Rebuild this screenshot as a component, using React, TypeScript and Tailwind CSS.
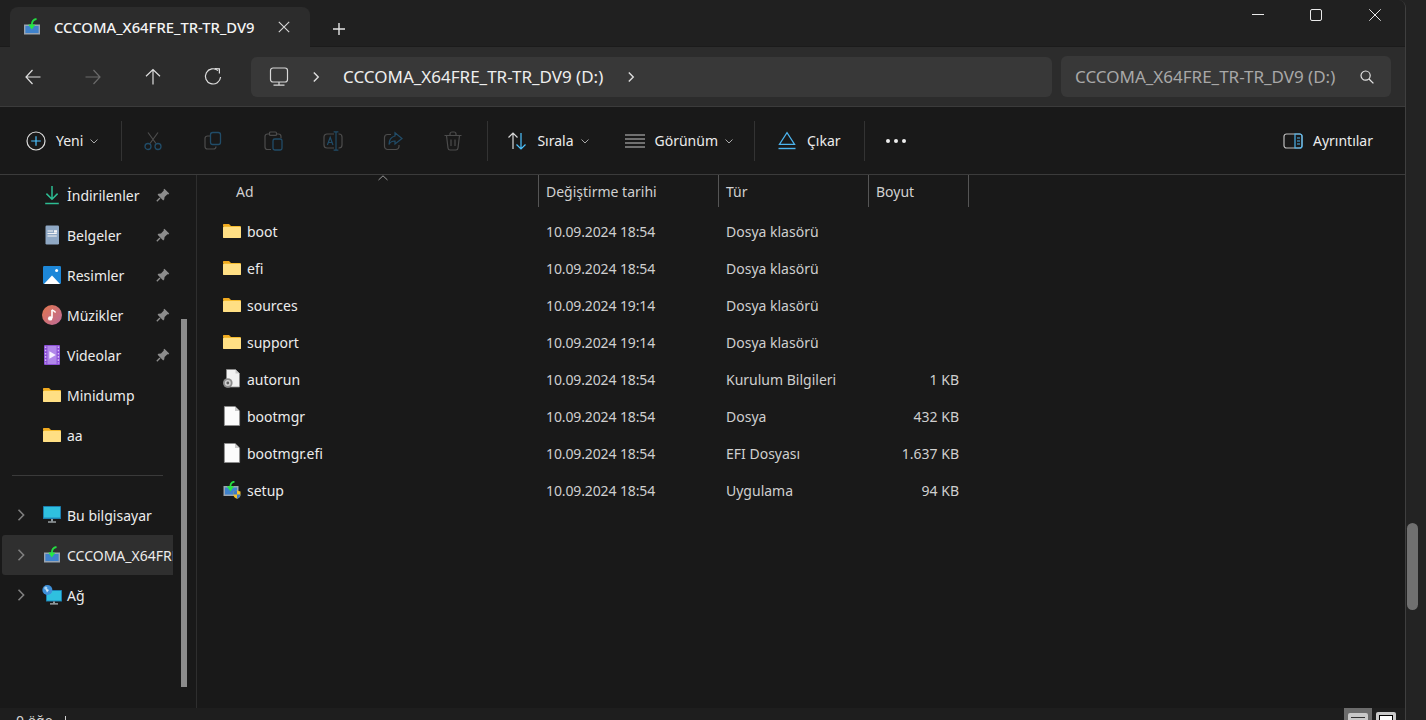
import type { ReactNode } from "react";

const FONT = "font-['Noto_Sans','Liberation_Sans',sans-serif]";

const Ico = ({ s = 20, className = "", children }: { s?: number; className?: string; children: ReactNode }) => (
  <svg width={s} height={s} viewBox="0 0 20 20" fill="none" className={`shrink-0 ${className}`}>
    {children}
  </svg>
);

const Back = ({ color = "#dedede", flip = false }: { color?: string; flip?: boolean }) => (
  <Ico s={20} className={flip ? "-scale-x-100" : ""}>
    <path d="M3 10H17.5M9.5 3L3 10L9.5 17" stroke={color} strokeWidth="1.2" />
  </Ico>
);

const Up = () => (
  <Ico>
    <path d="M10 17.5V2.5M3 9.2L10 2.5L17 9.2" stroke="#dedede" strokeWidth="1.2" />
  </Ico>
);

const Refresh = () => (
  <Ico>
    <path d="M15 3.6 A7.6 7.6 0 1 0 17.6 10" stroke="#dedede" strokeWidth="1.2" />
    <path d="M11.6 1.6L16.4 1.8V6.4" stroke="#dedede" strokeWidth="1.2" />
  </Ico>
);

const Monitor = () => (
  <Ico>
    <rect x="1.5" y="1" width="17" height="14" rx="2.5" stroke="#d8d8d8" strokeWidth="1.2" />
    <path d="M10 15V18M4.5 18.2H15.5" stroke="#d8d8d8" strokeWidth="1.2" />
  </Ico>
);

const Chevron = ({ color = "#dedede", s = 16 }: { color?: string; s?: number }) => (
  <svg width={s} height={s} viewBox="0 0 16 16" fill="none" className="shrink-0">
    <path d="M5.5 2.8L10.6 8L5.5 13.2" stroke={color} strokeWidth="1.6" />
  </svg>
);

const Caret = () => (
  <svg width="10" height="10" viewBox="0 0 10 10" fill="none" className="-ml-[4px] shrink-0">
    <path d="M1.5 3.5L5 7L8.5 3.5" stroke="#a8a8a8" strokeWidth="1" />
  </svg>
);

const Drive = ({ s = 18 }: { s?: number }) => (
  <svg width={s} height={s} viewBox="0 0 18 18" fill="none" className="shrink-0">
    <rect x="1" y="6.5" width="16" height="10" fill="#9aa5b2" />
    <rect x="2.4" y="8" width="13.2" height="7" fill="#3f82cc" />
    <path d="M13.5 1C10 1.6 8.8 3.6 8.8 7" stroke="#25dc42" strokeWidth="1.8" />
    <path d="M5.2 6.5H12.4L8.8 11.6Z" fill="#25e843" />
  </svg>
);

const Folder = () => (
  <svg width="18" height="14" viewBox="0 0 18 14" fill="none" className="shrink-0">
    <path d="M0 1C0 .4.4 0 1 0H6L8 2H0Z" fill="#f0a91f" />
    <rect y="2" width="18" height="12" rx="1" fill="#f5bb2e" />
    <rect y="3" width="18" height="11" rx="1" fill="#ffdf84" />
  </svg>
);

const Page = ({ gear = false }: { gear?: boolean }) => (
  <svg width="18" height="20" viewBox="0 0 18 20" fill="none" className="shrink-0">
    {gear ? (
      <g>
        <path d="M3.5 .5H12.5L16.5 4.5V18H3.5Z" fill="#f2f2f2" stroke="#8d8d8d" strokeWidth=".8" />
        <path d="M12.5 .5V4.5H16.5" fill="#c9c9c9" />
        <circle cx="4.8" cy="14" r="4.8" fill="#8c8c8c" />
        <circle cx="4.8" cy="14" r="3" fill="#d0d0d0" />
        <circle cx="4.8" cy="14" r="1.4" fill="#5d5d5d" />
      </g>
    ) : (
      <g>
        <path d="M1.4 .5H12L16.6 5V19.5H1.4Z" fill="#fcfcfc" stroke="#8d8d8d" strokeWidth=".8" />
        <path d="M12 .5V5H16.6" fill="#c9c9c9" />
      </g>
    )}
  </svg>
);

const Setup = () => (
  <svg width="18" height="18" viewBox="0 0 18 18" fill="none" className="shrink-0">
    <rect x="0.5" y="5" width="15" height="10" fill="#9aa5b2" />
    <rect x="2" y="6.5" width="12" height="7" fill="#3f82cc" />
    <path d="M11.5 .6C8 1.2 7.4 3 7.4 5.5" stroke="#25dc42" strokeWidth="1.8" />
    <path d="M3.8 5.2H11L7.4 10.4Z" fill="#25e843" />
    <path d="M10.5 10.5L14 9.5L17.5 10.5V14C17.5 16 15.5 17.3 14 17.8C12.5 17.3 10.5 16 10.5 14Z" fill="#f3c22e" />
    <path d="M14 9.5V13.6H10.5C10.5 12 10.5 11 10.5 10.5Z" fill="#3a78c9" />
    <path d="M14 13.6H17.5C17.5 16 15.5 17.3 14 17.8Z" fill="#3a78c9" />
  </svg>
);

const DownloadIco = () => (
  <svg width="18" height="20" viewBox="0 0 18 20" fill="none" className="shrink-0">
    <path d="M9 1V14M3.4 8.6L9 14.2L14.6 8.6M2.2 18.4H15.8" stroke="#2dbd93" strokeWidth="1.5" />
  </svg>
);

const DocIco = () => (
  <svg width="18" height="20" viewBox="0 0 18 20" fill="none" className="shrink-0">
    <rect x="2.5" y="0.5" width="13.5" height="19" rx="1.2" fill="#8fa8c4" />
    <path d="M4.5 6H10M4.5 8.5H13.8M4.5 11H13.8" stroke="#f4f4f4" strokeWidth="1" />
    <rect x="11" y="5.2" width="3" height="2.4" fill="#f4f4f4" />
  </svg>
);

const PicIco = () => (
  <svg width="18" height="18" viewBox="0 0 18 18" fill="none" className="shrink-0">
    <rect width="18" height="18" rx="1.2" fill="#1d87d8" />
    <circle cx="13.6" cy="4.6" r="1.5" fill="#fff" />
    <path d="M1 18L9 9.5L17 18Z" fill="#fff" />
  </svg>
);

const MusicIco = () => (
  <svg width="20" height="20" viewBox="0 0 20 20" fill="none" className="shrink-0">
    <defs>
      <linearGradient id="music" x1="0" y1="0" x2="1" y2="1">
        <stop offset="0" stopColor="#e2764c" />
        <stop offset="1" stopColor="#bd6a9a" />
      </linearGradient>
    </defs>
    <circle cx="10" cy="10" r="10" fill="url(#music)" />
    <path d="M10 5V13" stroke="#fff" strokeWidth="1.6" />
    <path d="M10 4.6C11 6 13 6 13.4 7.6" stroke="#fff" strokeWidth="1.6" />
    <circle cx="8.2" cy="13.4" r="2.2" fill="#fff" />
  </svg>
);

const VideoIco = () => (
  <svg width="16" height="20" viewBox="0 0 16 20" fill="none" className="shrink-0">
    <rect width="16" height="20" rx="1" fill="#8b4fd6" />
    <rect x="3.4" y="1" width="9.2" height="18" fill="#b187ea" />
    <path d="M1.6 1.5V18.5M14.4 1.5V18.5" stroke="#d6bdf5" strokeWidth="1.4" strokeDasharray="1.6 1.6" />
    <path d="M5.4 6.2L11.8 10L5.4 13.8Z" fill="#f6efff" />
  </svg>
);

const PcIco = () => (
  <svg width="18" height="18" viewBox="0 0 18 18" fill="none" className="shrink-0">
    <rect y="0" width="18" height="13" rx=".6" fill="#1c7fb0" />
    <rect x="1" y="1" width="16" height="10.6" fill="#2fc0df" />
    <rect x="8" y="13" width="2" height="2.4" fill="#8f9aa0" />
    <rect x="5" y="15.4" width="8" height="1.2" fill="#b8c0c4" />
  </svg>
);

const NetIco = () => (
  <svg width="20" height="20" viewBox="0 0 20 20" fill="none" className="shrink-0">
    <rect x="4" y="5" width="16" height="11.5" rx=".6" fill="#1c7fb0" />
    <rect x="5" y="6" width="14" height="9.6" fill="#2fc0df" />
    <rect x="11" y="16.5" width="2" height="1.8" fill="#8f9aa0" />
    <rect x="8" y="18.3" width="8" height="1.2" fill="#b8c0c4" />
    <circle cx="5.4" cy="5" r="5" fill="#3e8fd8" />
    <path d="M3 3L7 5L5 7.5Z" fill="#cfe6f7" />
    <circle cx="3.8" cy="3" r="1.6" fill="#a9d4f2" />
  </svg>
);

const Pin = () => (
  <svg width="14" height="14" viewBox="0 0 14 14" fill="none" className="shrink-0">
    <path d="M8.4.8L13.2 5.6L12.4 6.4L11.4 6.2L8.6 9L8.2 11.6L7.2 12.4L1.6 6.8L2.4 5.8L5 5.4L7.8 2.6L7.6 1.6Z" fill="#8c8c8c" />
    <path d="M4 10L.8 13.2" stroke="#8c8c8c" strokeWidth="1.4" />
  </svg>
);

const Sep = () => <div className="mx-[1px] h-10 w-px shrink-0 bg-[#333333]" />;

const DIM = "#4c4c4c";
const DIMB = "#214c68";

const Cut = () => (
  <Ico>
    <path d="M5 1.5L13 12.5M15 1.5L7 12.5" stroke={DIM} strokeWidth="1.2" />
    <circle cx="5" cy="15.5" r="3" stroke={DIMB} strokeWidth="1.3" />
    <circle cx="15" cy="15.5" r="3" stroke={DIMB} strokeWidth="1.3" />
  </Ico>
);

const Copy = () => (
  <Ico>
    <rect x="7.5" y="1.5" width="10" height="12" rx="2.2" stroke={DIMB} strokeWidth="1.3" />
    <path d="M7 5H4.5C3 5 2 6 2 7.5V15.5C2 17 3 18 4.5 18H10.5C12 18 13 17 13 15.5" stroke={DIM} strokeWidth="1.2" />
  </Ico>
);

const Paste = () => (
  <Ico>
    <path d="M6 3H4.5C3 3 2 4 2 5.5V16C2 17.5 3 18.5 4.5 18.5H8M14 3H15.5C17 3 18 4 18 5.5V7" stroke={DIM} strokeWidth="1.2" />
    <rect x="6.5" y="1" width="7" height="3.4" rx="1" stroke={DIM} strokeWidth="1.2" />
    <rect x="10" y="8" width="9" height="11" rx="1.8" stroke={DIMB} strokeWidth="1.3" />
  </Ico>
);

const Rename = () => (
  <Ico>
    <path d="M11 3H4C2.5 3 1 4 1 6V14C1 16 2.5 17 4 17H11M15.5 3H16C17.5 3 19 4 19 6V14C19 16 17.5 17 16 17H15.5" stroke={DIM} strokeWidth="1.2" />
    <path d="M13 .8V19.2M10.6.8H15.4M10.6 19.2H15.4" stroke={DIMB} strokeWidth="1.2" />
    <path d="M4.4 14L7.2 6.2L10 14M5.4 11.5H9" stroke={DIMB} strokeWidth="1.2" />
  </Ico>
);

const Share = () => (
  <Ico>
    <path d="M8 3.5H4.5C3 3.5 1.5 4.5 1.5 6.5V15.5C1.5 17 3 18.5 4.5 18.5H13C14.5 18.5 16 17 16 15.5V14" stroke={DIM} strokeWidth="1.2" />
    <path d="M12 1.8L19 7.5L12 13V10C9 10 7 11 6 13.5C6 9 8 6 12 5Z" stroke={DIMB} strokeWidth="1.2" />
  </Ico>
);

const Trash = () => (
  <Ico>
    <path d="M1.5 4.5H18.5M7 4.5V3C7 2 8 1 9 1H11C12 1 13 2 13 3V4.5M3.5 4.5L5 17C5.1 18 6 19 7 19H13C14 19 14.9 18 15 17L16.5 4.5M8 8.5V15M12 8.5V15" stroke={DIM} strokeWidth="1.2" />
  </Ico>
);

const Tool = ({ icon, label, caret }: { icon: ReactNode; label: string; caret?: boolean }) => (
  <div className="flex items-center gap-[10px]">
    {icon}
    <span className="text-[14px] text-[#ececec]">{label}</span>
    {caret && <Caret />}
  </div>
);

const SideRow = ({ icon, label, pin, chevron, active }: { icon: ReactNode; label: string; pin?: boolean; chevron?: boolean; active?: boolean }) => (
  <div className={`flex h-10 items-center overflow-hidden rounded-l-[3px] ${active ? "bg-[#2f2f2f]" : ""}`}>
    <div className="flex w-[37px] shrink-0 justify-center pl-[1px]">{chevron && <Chevron color="#7e7e7e" />}</div>
    <div className="flex w-[26px] shrink-0 justify-center">{icon}</div>
    <span className="ml-[2px] whitespace-nowrap text-[14px] text-[#ececec]">{label}</span>
    {pin && (
      <div className="ml-auto mr-[3px]">
        <Pin />
      </div>
    )}
  </div>
);

const COLS = "grid grid-cols-[340px_180px_150px_101px]";

const files: { icon: ReactNode; name: string; date: string; type: string; size: string }[] = [
  { icon: <Folder />, name: "boot", date: "10.09.2024 18:54", type: "Dosya klasörü", size: "" },
  { icon: <Folder />, name: "efi", date: "10.09.2024 18:54", type: "Dosya klasörü", size: "" },
  { icon: <Folder />, name: "sources", date: "10.09.2024 19:14", type: "Dosya klasörü", size: "" },
  { icon: <Folder />, name: "support", date: "10.09.2024 19:14", type: "Dosya klasörü", size: "" },
  { icon: <Page gear />, name: "autorun", date: "10.09.2024 18:54", type: "Kurulum Bilgileri", size: "1 KB" },
  { icon: <Page />, name: "bootmgr", date: "10.09.2024 18:54", type: "Dosya", size: "432 KB" },
  { icon: <Page />, name: "bootmgr.efi", date: "10.09.2024 18:54", type: "EFI Dosyası", size: "1.637 KB" },
  { icon: <Setup />, name: "setup", date: "10.09.2024 18:54", type: "Uygulama", size: "94 KB" },
];

const Head = ({ label, sep = true }: { label: string; sep?: boolean }) => (
  <div className={`flex h-[32px] items-center pl-[7px] text-[14px] text-[#d0d0d0] ${sep ? "border-l border-[#555555]" : ""}`}>{label}</div>
);

export default function App() {
  return (
    <div className={`flex h-[720px] w-[1426px] overflow-hidden bg-[#232323] ${FONT}`}>
      <div className="flex w-[1406px] shrink-0 flex-col overflow-hidden rounded-tr-[8px] border-r border-[#3f3f3f]">
        {/* tabs */}
        <div className="flex h-[47px] shrink-0 items-end bg-[#202020] pl-[10px] shadow-[inset_0_-1px_0_#1b1b1b]">
          <div className="flex h-[40px] w-[300px] items-center rounded-t-[8px] bg-[#2c2c2c] pl-[13px]">
            <Drive s={18} />
            <span className="ml-[13px] whitespace-nowrap text-[14.8px] font-medium text-[#f4f4f4]">CCCOMA_X64FRE_TR-TR_DV9</span>
            <svg width="12" height="12" viewBox="0 0 12 12" fill="none" className="ml-auto mr-[20px]">
              <path d="M.8.8L11.2 11.2M11.2.8L.8 11.2" stroke="#d8d8d8" strokeWidth="1.1" />
            </svg>
          </div>
          <div className="ml-[23px] mb-[12px]">
            <svg width="12" height="12" viewBox="0 0 12 12" fill="none">
              <path d="M6 0V12M0 6H12" stroke="#e4e4e4" strokeWidth="1.4" />
            </svg>
          </div>
          <div className="ml-auto flex h-full items-start pt-[9px] pr-[24px]">
            <svg width="12" height="12" viewBox="0 0 12 12" fill="none">
              <path d="M0 5.5H12" stroke="#eaeaea" strokeWidth="1" />
            </svg>
            <svg width="12" height="12" viewBox="0 0 12 12" fill="none" className="ml-[46px]">
              <rect x=".5" y=".5" width="11" height="11" rx="1.5" stroke="#eaeaea" strokeWidth="1" />
            </svg>
            <svg width="12" height="12" viewBox="0 0 12 12" fill="none" className="ml-[47px]">
              <path d="M.3.3L11.7 11.7M11.7.3L.3 11.7" stroke="#eaeaea" strokeWidth="1" />
            </svg>
          </div>
        </div>

        {/* nav */}
        <div className="flex h-[60px] shrink-0 items-center border-b border-[#3b3b3b] bg-[#2c2c2c] pl-[23px]">
          <div className="flex w-[228px] items-center gap-[40px]">
            <Back />
            <Back color="#6a6a6a" flip />
            <Up />
            <Refresh />
          </div>
          <div className="flex h-[40px] w-[801px] items-center rounded-[6px] bg-[#383838] pl-[18px]">
            <Monitor />
            <div className="ml-[20px]">
              <Chevron s={14} />
            </div>
            <span className="ml-[20px] whitespace-nowrap text-[17px] text-[#eeeeee]">CCCOMA_X64FRE_TR-TR_DV9 (D:)</span>
            <div className="ml-[21px]">
              <Chevron s={14} />
            </div>
          </div>
          <div className="ml-[9px] flex h-[41px] w-[330px] items-center rounded-[6px] bg-[#383838] pl-[14px]">
            <span className="w-[261px] overflow-hidden whitespace-nowrap text-[17px] text-[#a8a8a8]">CCCOMA_X64FRE_TR-TR_DV9 (D:)</span>
            <svg width="14" height="14" viewBox="0 0 14 14" fill="none" className="ml-[24px]">
              <circle cx="5.6" cy="5.6" r="4.6" stroke="#e2e2e2" strokeWidth="1.2" />
              <path d="M9 9L13.4 13.4" stroke="#e2e2e2" strokeWidth="1.3" />
            </svg>
          </div>
        </div>

        {/* toolbar */}
        <div className="flex h-[68px] shrink-0 items-center border-b border-[#3b3b3b] bg-[#191919] pl-[26px] pr-[32px]">
          <Tool
            caret
            label="Yeni"
            icon={
              <Ico>
                <circle cx="10" cy="10" r="9" stroke="#dcdcdc" strokeWidth="1.2" />
                <path d="M10 5.2V14.8M5.2 10H14.8" stroke="#4cc2ff" strokeWidth="1.2" />
              </Ico>
            }
          />
          <div className="ml-[21px]">
            <Sep />
          </div>
          <div className="ml-[20px] flex items-center gap-[40px]">
            <Cut />
            <Copy />
            <Paste />
            <Rename />
            <Share />
            <Trash />
          </div>
          <div className="ml-[23px]">
            <Sep />
          </div>
          <div className="ml-[18px]">
            <Tool
              caret
              label="Sırala"
              icon={
                <Ico>
                  <path d="M6 18V2M1.5 6.5L6 2L10.5 6.5" stroke="#d8d8d8" strokeWidth="1.2" />
                  <path d="M14 2V18M9.5 13.5L14 18L18.5 13.5" stroke="#4cc2ff" strokeWidth="1.2" />
                </Ico>
              }
            />
          </div>
          <div className="ml-[35px]">
            <Tool
              caret
              label="Görünüm"
              icon={
                <Ico>
                  <path d="M0 4H20M0 8H20M0 12H20M0 16H20" stroke="#c8c8c8" strokeWidth="1.2" />
                </Ico>
              }
            />
          </div>
          <div className="ml-[19px]">
            <Sep />
          </div>
          <div className="ml-[21px]">
            <Tool
              label="Çıkar"
              icon={
                <Ico>
                  <path d="M10 1.6L17.6 13.4H2.4Z" stroke="#4cb4ee" strokeWidth="1.2" />
                  <path d="M1.5 17.5H18.5" stroke="#4cb4ee" strokeWidth="1.4" />
                </Ico>
              }
            />
          </div>
          <div className="ml-[22px]">
            <Sep />
          </div>
          <div className="ml-[20px] flex gap-[4px]">
            <div className="h-[4px] w-[4px] rounded-full bg-[#eeeeee]" />
            <div className="h-[4px] w-[4px] rounded-full bg-[#eeeeee]" />
            <div className="h-[4px] w-[4px] rounded-full bg-[#eeeeee]" />
          </div>
          <div className="ml-auto">
            <Tool
              label="Ayrıntılar"
              icon={
                <Ico>
                  <rect x="1" y="3" width="18" height="14" rx="2.5" stroke="#bdbdbd" strokeWidth="1.2" />
                  <path d="M12 3V17H17C18 17 19 16 19 15V5C19 4 18 3 17 3Z" stroke="#4cb4ee" strokeWidth="1.2" />
                  <path d="M14 7H17M14 10H17M14 13H17" stroke="#4cb4ee" strokeWidth="1" />
                </Ico>
              }
            />
          </div>
        </div>

        {/* body */}
        <div className="flex min-h-0 flex-1 bg-[#191919]">
          <div className="flex w-[197px] shrink-0 border-r border-[#2e2e2e] pl-[2px]">
            <div className="w-[171px] shrink-0">
              <SideRow icon={<DownloadIco />} label="İndirilenler" pin />
              <SideRow icon={<DocIco />} label="Belgeler" pin />
              <SideRow icon={<PicIco />} label="Resimler" pin />
              <SideRow icon={<MusicIco />} label="Müzikler" pin />
              <SideRow icon={<VideoIco />} label="Videolar" pin />
              <SideRow icon={<Folder />} label="Minidump" />
              <SideRow icon={<Folder />} label="aa" />
              <div className="flex h-10 items-center pl-[10px] pr-[10px]">
                <div className="h-px w-full bg-[#3a3a3a]" />
              </div>
              <SideRow icon={<PcIco />} label="Bu bilgisayar" chevron />
              <SideRow icon={<Drive />} label="CCCOMA_X64FRE_TR-TR_DV9 (D:)" chevron active />
              <SideRow icon={<NetIco />} label="Ağ" chevron />
            </div>
            <div className="ml-[8px] mt-[144px] h-[368px] w-[6px] bg-[#8c8c8c]" />
          </div>

          <div className="min-w-0 flex-1 pl-[1px]">
            <div className="relative">
              <div className={`${COLS} h-[32px]`}>
                <div className="flex h-[32px] items-center pl-[38px] text-[14px] text-[#d0d0d0]">Ad</div>
                <Head label="Değiştirme tarihi" />
                <Head label="Tür" />
                <div className="border-r border-[#555555]">
                  <Head label="Boyut" />
                </div>
              </div>
              <svg width="10" height="6" viewBox="0 0 10 6" fill="none" className="absolute left-[180px] top-0">
                <path d="M.5 5L5 .8L9.5 5" stroke="#9a9a9a" strokeWidth="1" />
              </svg>
            </div>
            <div className="pt-[6px]">
              {files.map((f) => (
                <div key={f.name} className={`${COLS} h-[37px] items-center text-[14px]`}>
                  <div className="flex items-center">
                    <div className="mb-[2px] flex w-[49px] shrink-0 justify-end pr-[6px]">{f.icon}</div>
                    <span className="text-[#ececec]">{f.name}</span>
                  </div>
                  <span className="pl-[8px] tracking-[-0.12px] text-[#cfcfcf]">{f.date}</span>
                  <span className="pl-[8px] text-[#cfcfcf]">{f.type}</span>
                  <span className="pr-[10px] text-right text-[#cfcfcf]">{f.size}</span>
                </div>
              ))}
            </div>
          </div>
        </div>

        {/* status */}
        <div className="flex h-[12px] shrink-0 items-start bg-[#1e1e1e]">
          <span className="ml-[16px] mt-[4px] whitespace-nowrap text-[14px] leading-[18px] text-[#d8d8d8]">0 öğe</span>
          <div className="ml-[12px] mt-[8px] h-[4px] w-px bg-[#d0d0d0]" />
          <div className="ml-auto mr-[9px] flex items-start gap-[4px]">
            <div className="flex h-[12px] w-[28px] justify-center bg-[#6c6c6c] pt-[5px]">
              <div className="h-[7px] w-[20px] rounded-t-[2px] bg-[#c9c9c9] pt-[4px]">
                <div className="mx-auto h-px w-[14px] bg-[#333333]" />
              </div>
            </div>
            <div className="mt-[4px] h-[8px] w-[20px] rounded-t-[2px] bg-[#c9c9c9] px-[3px] pt-[3px]">
              <div className="h-[5px] border-x border-t border-black bg-white" />
            </div>
          </div>
        </div>
      </div>

      {/* outer scrollbar */}
      <div className="ml-[1px] mt-[523px] h-[87px] w-[11px] rounded-full bg-[#707070]" />
    </div>
  );
}
